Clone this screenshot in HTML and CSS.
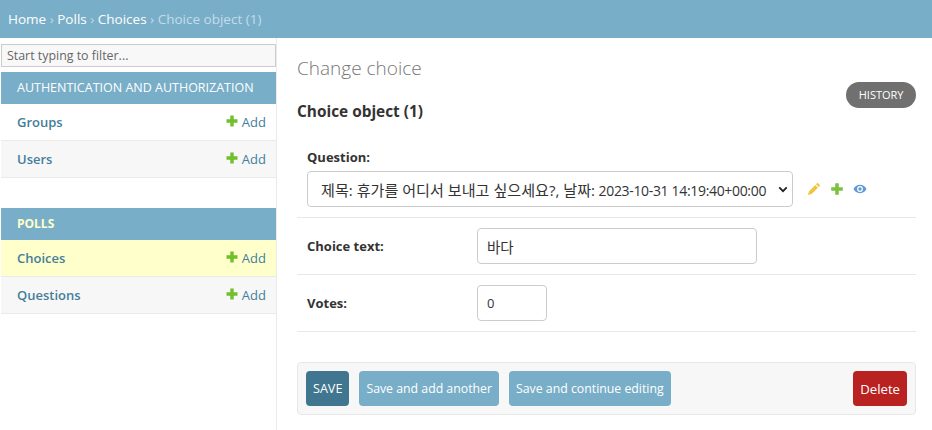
FILE: index.html
```html
<!DOCTYPE html>
<html lang="en">
<head>
<meta charset="utf-8">
<title>Change choice</title>
<link rel="stylesheet" href="styles.css">
</head>
<body>
<header class="crumbs"><a href="#">Home</a> › <a href="#">Polls</a> › <a href="#">Choices</a> › Choice object (1)</header>
<div class="layout">
  <nav class="sidebar">
    <input class="filter" type="text" placeholder="Start typing to filter...">
    <section class="app">
      <h2 class="caption">Authentication and Authorization</h2>
      <div class="row"><a class="model" href="#">Groups</a><a class="add" href="#"><svg class="plus" viewBox="0 0 12 12"><path d="M4.300 .5h3.400v3.800h3.800v3.400H7.700v3.800H4.300V7.700H.5V4.300h3.800z"/></svg>Add</a></div>
      <div class="row alt"><a class="model" href="#">Users</a><a class="add" href="#"><svg class="plus" viewBox="0 0 12 12"><path d="M4.300 .5h3.400v3.800h3.800v3.400H7.700v3.800H4.300V7.700H.5V4.300h3.800z"/></svg>Add</a></div>
    </section>
    <section class="app">
      <h2 class="caption current">Polls</h2>
      <div class="row selected"><a class="model" href="#">Choices</a><a class="add" href="#"><svg class="plus" viewBox="0 0 12 12"><path d="M4.300 .5h3.400v3.800h3.800v3.400H7.700v3.800H4.300V7.700H.5V4.300h3.800z"/></svg>Add</a></div>
      <div class="row alt"><a class="model" href="#">Questions</a><a class="add" href="#"><svg class="plus" viewBox="0 0 12 12"><path d="M4.300 .5h3.400v3.800h3.800v3.400H7.700v3.800H4.300V7.700H.5V4.300h3.800z"/></svg>Add</a></div>
    </section>
  </nav>
  <main class="content">
    <h1 class="title">Change choice</h1>
    <div class="object-head">
      <h2 class="object">Choice object (1)</h2>
      <a class="history" href="#">History</a>
    </div>
    <form class="form">
      <div class="field stacked">
        <label class="label">Question:</label>
        <div class="related">
          <div class="input select" role="combobox" aria-expanded="false">
            <span class="select-value"><span class="ko">제목: 휴가를 어디서 보내고 싶으세요?, 날짜:</span> <span class="num">2023-10-31 14:19:40+00:00</span></span>
            <svg class="chevron" viewBox="0 0 12 8"><path d="M1.500 1.500L6 6l4.500-4.500" fill="none" stroke="#222" stroke-width="2.200"/></svg>
          </div>
          <svg class="ico" viewBox="0 0 14 14"><path fill="#f2c33c" d="M10.500 .8l2.700 2.700-1.500 1.500L9 2.300zM8.200 3.100l2.700 2.700-6.300 6.300L1 13l.9-3.600z"/></svg>
          <svg class="ico" viewBox="0 0 14 14"><path fill="#7cc242" d="M5.200 1.200h3.600v4h4v3.600h-4v4H5.200v-4h-4V5.200h4z"/></svg>
          <svg class="ico" viewBox="0 0 14 14"><path fill="#5f9bd1" fill-rule="evenodd" d="M7 2.800c3 0 5.300 1.900 6.500 4.200-1.200 2.300-3.500 4.200-6.500 4.200S1.700 9.300.5 7C1.700 4.700 4 2.800 7 2.800zm0 1.300a2.900 2.900 0 1 0 0 5.800 2.900 2.900 0 0 0 0-5.800z"/><circle cx="7" cy="7" r="1.700" fill="#5f9bd1"/></svg>
        </div>
      </div>
      <div class="field">
        <label class="label wide">Choice text:</label>
        <input class="input text" type="text" value="바다">
      </div>
      <div class="field">
        <label class="label wide">Votes:</label>
        <input class="input number" type="text" value="0">
      </div>
      <div class="actions">
        <button class="btn default" type="button">SAVE</button>
        <button class="btn" type="button">Save and add another</button>
        <button class="btn" type="button">Save and continue editing</button>
        <a class="btn delete" href="#">Delete</a>
      </div>
    </form>
  </main>
</div>
</body>
</html>
```
FILE: styles.css
```css
* { box-sizing: border-box; }
html, body { margin: 0; padding: 0; height: 100%; overflow: hidden; }
body {
  background: #fff;
  color: #333;
  font-family: "Open Sans", "Noto Sans", "Noto Sans CJK KR", sans-serif;
  font-size: 14px;
}
a { text-decoration: none; }
.crumbs {
  height: 38px;
  padding: 0 8px;
  background: #79aec8;
  color: #c4dce8;
  font-size: 13.5px;
  line-height: 38px;
  white-space: nowrap;
}
.crumbs a { color: #fff; }
.layout { display: flex; height: 392px; }
.sidebar {
  flex: 0 0 277px;
  padding: 6px 0 0 1px;
  border-right: 1px solid #eaeaea;
}
.filter {
  display: block;
  width: 275px;
  height: 23px;
  margin: 0 0 5px;
  padding: 0 5px;
  border: 1px solid #ccc;
  background: #f8f8f8;
  font: 12.4px "Open Sans", sans-serif;
  color: #333;
  outline: 0;
}
.filter::placeholder { color: #666; opacity: 1; }
.app { margin-bottom: 30px; }
.caption {
  height: 32px;
  margin: 0;
  padding: 0 16px;
  background: #79aec8;
  color: #fff;
  font-size: 12.5px;
  font-weight: 400;
  line-height: 32px;
  text-transform: uppercase;
  white-space: nowrap;
}
.caption.current { color: #ffc; font-weight: 700; font-size: 12px; }
.row {
  display: flex;
  justify-content: space-between;
  align-items: center;
  height: 37px;
  padding: 0 10px 0 16px;
  border-bottom: 1px solid #eaeaea;
  background: #fff;
}
.row.alt { background: #f7f7f7; }
.row.selected { background: #ffc; }
.model { color: #447e9b; font-size: 13px; font-weight: 600; }
.add { display: flex; align-items: center; color: #447e9b; font-size: 13px; }
.plus { width: 12px; height: 12px; margin: -3px 4px 0 0; fill: #70bf2b; }
.content { flex: 1; padding: 0 16px 0 20px; min-width: 0; }
.title {
  margin: 0;
  padding-top: 17px;
  color: #777;
  font-size: 19px;
  font-weight: 300;
  line-height: 26px;
}
.object-head { display: flex; justify-content: space-between; height: 50px; }
.object {
  margin: 18px 0 0;
  color: #333;
  font-size: 15.4px;
  font-weight: 700;
  line-height: 26px;
}
.history {
  align-self: flex-start;
  margin-top: 1px;
  padding: 0 12.5px;
  height: 26px;
  border-radius: 13px;
  background: #707070;
  color: #fff;
  font-size: 11px;
  line-height: 26px;
  text-transform: uppercase;
}
.field {
  display: flex;
  align-items: center;
  padding: 10px;
  border-bottom: 1px solid #e8e8e8;
  height: 57px;
}
.field.stacked {
  display: block;
  height: 76px;
  margin-top: 11px;
  padding: 6px 10px 0;
}
.label { color: #333; font-size: 13px; font-weight: 700; display: block; line-height: 18px; }
.stacked .label { margin-bottom: 5px; }
.wide { flex: 0 0 170px; }
.related { display: flex; align-items: center; }
.input {
  height: 36px;
  border: 1px solid #ccc;
  border-radius: 4px;
  background: #fff;
  color: #333;
  font: 13px "Open Sans", "Noto Sans CJK KR", sans-serif;
  padding: 5px 9px;
  outline: 0;
}
.select {
  display: flex;
  align-items: center;
  justify-content: space-between;
  width: 486px;
  margin-right: 14px;
  padding: 0 4px 0 13px;
  font-size: 13.5px;
  white-space: nowrap;
}
.ko { font-size: 15.1px; }
.num { font-size: 14px; letter-spacing: -.33px; }
.chevron { width: 10px; height: 7px; flex: none; }
.text { width: 280px; font-size: 14.5px; }
.number { width: 70px; }
.ico { width: 14px; height: 14px; margin-right: 9px; }
.actions {
  display: flex;
  gap: 10px;
  align-items: center;
  margin-top: 30px;
  height: 53px;
  padding: 0 8px;
  border: 1px solid #e8e8e8;
  border-radius: 4px;
  background: #f7f7f7;
}
.btn {
  height: 35px;
  padding: 0 7px;
  border: 0;
  border-radius: 4px;
  background: #79aec8;
  color: #fff;
  font: 12.3px/36px "Open Sans", sans-serif;
}
.btn.default { background: #417690; font-size: 12.6px; }
.btn.delete { margin-left: auto; background: #ba2121; font-size: 13.2px; }
```
